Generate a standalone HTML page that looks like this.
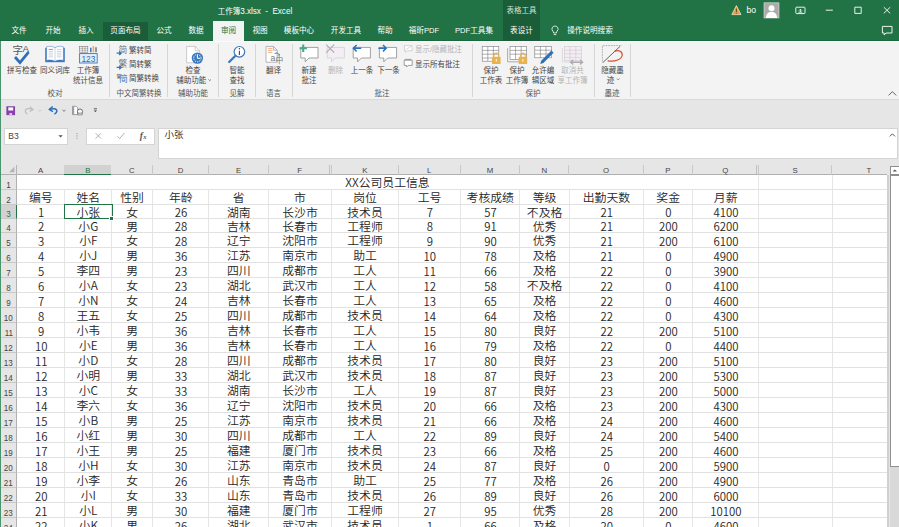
<!DOCTYPE html><html lang="zh-CN"><head><meta charset="utf-8"><title>工作簿3.xlsx - Excel</title>
<style>
*{box-sizing:border-box;margin:0;padding:0}
html,body{width:899px;height:527px;overflow:hidden;background:#e6e6e6}
body{font-family:"Liberation Sans","Noto Sans CJK SC",sans-serif;color:#444}
#app{position:relative;width:899px;height:527px;overflow:hidden;background:#e6e6e6}
.abs{position:absolute}
#titlebar{position:absolute;left:0;top:0;width:899px;height:40.8px;background:#217346;border-bottom:1.1px solid #1c683d}
#ttl{position:absolute;left:155px;width:200px;top:5.8px;text-align:center;color:#fff;font-size:8.200px;line-height:12px;white-space:pre;letter-spacing:-0.05px}
.ctx{position:absolute;left:502.5px;top:0;width:37.8px;height:41px;background:#1b5c39}
.ctxl{position:absolute;left:496.500px;top:5px;width:50px;text-align:center;color:#cfe3d7;font-size:7.5px;line-height:12px}
.tab{position:absolute;top:21px;height:20px;line-height:19px;font-size:7.6px;color:#fff;text-align:center;white-space:nowrap}
.tab.hov{background:#1b5c39}
.tab.act{background:#f3f3f3;color:#217346}
#ribbon{position:absolute;left:1px;top:40.8px;width:898px;height:59.2px;background:#f3f3f3;border-top:1px solid #fbfbfb;border-bottom:1px solid #dadada}
.sep{position:absolute;top:44px;width:1px;height:53px;background:#d6d6d6}
.lb{position:absolute;font-size:7.5px;line-height:9.6px;color:#444;text-align:center;white-space:nowrap}
.lb.dis{color:#b4b4b4}
.gl{position:absolute;top:88.5px;font-size:7.5px;line-height:10px;color:#555;text-align:center;white-space:nowrap}
.sm{position:absolute;font-size:7.5px;line-height:10px;color:#444;white-space:nowrap}
.sm.dis{color:#b4b4b4}
svg{position:absolute;overflow:visible}
#lborder{position:absolute;left:0;top:40.7px;width:1.1px;height:487px;background:#4a946e;z-index:10}
.box{position:absolute;background:#fff;border:0.7px solid #d4d4d4}
/* grid */
#grid{position:absolute;left:0;top:0;width:887.2px;height:527px;overflow:hidden}
#gridbg{position:absolute}
.colhdr{position:absolute;left:0;top:164.6px;width:888.5px;height:10.5px;background:#e6e6e6;border-bottom:1px solid #b0b0b0}
.ch{position:absolute;top:0;height:10.5px;line-height:12.6px;font-size:7.8px;overflow:hidden;color:#444;text-align:center;border-right:1px solid #c8c8c8}
.ch.sel{background:#d2d2d2;color:#217346;border-bottom:1.4px solid #217346}
.rh{position:absolute;left:1.2px;width:15.8px;padding-left:0.2px;background:#e6e6e6;font-size:9.4px;overflow:hidden;color:#444;text-align:center;border-right:1px solid #b0b0b0;border-bottom:1px solid #c8c8c8}
.rh.sel{background:#d2d2d2;color:#217346;border-right:1.4px solid #217346}
.vl{position:absolute;top:175px;width:1px;height:353px;background:#e6e6e6}
.hl{position:absolute;left:16.7px;width:871.3px;height:1px;background:#e1e1e1}
.hid{position:absolute;top:165px;width:0.8px;height:9px;background:#c0c0c0}
.c{position:absolute;font-family:"Noto Sans CJK SC","Liberation Sans",sans-serif;font-size:11.85px;color:#262626;font-weight:350;text-align:center;white-space:nowrap;overflow:hidden;padding-left:0.6px}
.title{position:absolute;font-family:"Noto Sans CJK SC","Liberation Sans",sans-serif;left:17px;width:741px;background:#fff;font-size:11.85px;color:#262626;font-weight:350;text-align:center;white-space:nowrap}
.selbox{position:absolute;border:1.5px solid #217346}
.selh{position:absolute;width:3.2px;height:3.2px;background:#217346;border:0.6px solid #fff;box-sizing:content-box}

.rh span{display:inline-block;transform:scaleX(.86)}
.c.n{font-size:11.4px;padding-left:1.2px}

</style></head><body><div id="app">
<div id="titlebar"></div>
<div class="ctx"></div><div class="ctxl">表格工具</div>
<div id="ttl"><span style="font-size:7.5px">工作簿</span>3.xlsx  -  Excel</div>
<div class="tab" style="left:4px;width:30px">文件</div>
<div class="tab" style="left:38px;width:30px">开始</div>
<div class="tab" style="left:71px;width:30px">插入</div>
<div class="tab hov" style="left:103px;width:45px;top:22px;height:19px;line-height:17px">页面布局</div>
<div class="tab" style="left:149px;width:30px">公式</div>
<div class="tab" style="left:181px;width:30px">数据</div>
<div class="tab act" style="left:213px;width:31px">审阅</div>
<div class="tab" style="left:245px;width:30px">视图</div>
<div class="tab" style="left:279px;width:40px">模板中心</div>
<div class="tab" style="left:326px;width:40px">开发工具</div>
<div class="tab" style="left:370px;width:30px">帮助</div>
<div class="tab" style="left:404px;width:40px">福昕PDF</div>
<div class="tab" style="left:452px;width:44px">PDF工具集</div>
<div class="tab" style="left:496.500px;width:50px">表设计</div>
<div class="tab" style="left:564px;width:52px">操作说明搜索</div>
<div id="ribbon"></div>
<div class="sep" style="left:109.3px"></div>
<div class="sep" style="left:167px"></div>
<div class="sep" style="left:218.4px"></div>
<div class="sep" style="left:254.8px"></div>
<div class="sep" style="left:291.5px"></div>
<div class="sep" style="left:472.4px"></div>
<div class="sep" style="left:593.8px"></div>
<div class="sep" style="left:630px"></div>
<div class="lb" style="left:2px;width:40px;top:66.1px">拼写检查</div>
<div class="lb" style="left:35px;width:40px;top:66.1px">同义词库</div>
<div class="lb" style="left:68px;width:40px;top:66.1px">工作簿<br>统计信息</div>
<div class="gl" style="left:35px;width:40px">校对</div>
<div class="sm" style="left:129px;top:46.2px">繁转简</div>
<div class="sm" style="left:129px;top:60.4px">简转繁</div>
<div class="sm" style="left:129px;top:74.3px">简繁转换</div>
<div class="gl" style="left:113px;width:52px">中文简繁转换</div>
<div class="lb" style="left:168px;width:50px;top:66.1px">检查<br><span style="margin-left:-3.5px">辅助功能</span></div>
<div class="gl" style="left:168px;width:50px">辅助功能</div>
<div class="lb" style="left:219px;width:36px;top:66.1px">智能<br>查找</div>
<div class="gl" style="left:219px;width:36px">见解</div>
<div class="lb" style="left:255px;width:37px;top:66.1px">翻译</div>
<div class="gl" style="left:255px;width:37px">语言</div>
<div class="lb" style="left:294px;width:30px;top:66.1px">新建<br>批注</div>
<div class="lb dis" style="left:320.5px;width:30px;top:66.1px">删除</div>
<div class="lb" style="left:347px;width:30px;top:66.1px">上一条</div>
<div class="lb" style="left:373.5px;width:30px;top:66.1px">下一条</div>
<div class="sm dis" style="left:415px;top:45px">显示/隐藏批注</div>
<div class="sm" style="left:415px;top:59.6px">显示所有批注</div>
<div class="gl" style="left:362px;width:40px">批注</div>
<div class="lb" style="left:471px;width:40px;top:66.1px">保护<br>工作表</div>
<div class="lb" style="left:497px;width:40px;top:66.1px">保护<br>工作簿</div>
<div class="lb" style="left:523px;width:40px;top:66.1px">允许编<br>辑区域</div>
<div class="lb dis" style="left:552.5px;width:40px;top:66.1px">取消共<br>享工作簿</div>
<div class="gl" style="left:513px;width:40px">保护</div>
<div class="lb" style="left:592.5px;width:40px;top:66.1px">隐藏墨<br><span style="margin-left:-4px">迹</span></div>
<div class="gl" style="left:592px;width:40px">墨迹</div>
<!-- formula bar -->
<div class="box" style="left:4.4px;top:127.6px;width:63.4px;height:17px"></div>
<div class="sm" style="left:8.3px;top:131px;font-size:8.5px">B3</div>
<div class="box" style="left:86.3px;top:127.6px;width:68.3px;height:17px"></div>
<div class="box" style="left:157.5px;top:127.6px;width:740.5px;height:31px"></div>
<div class="sm" style="left:164.5px;top:130.3px;font-size:9.5px;color:#333">小张</div>
<div style="position:absolute;left:16.5px;top:174.8px;width:871.5px;height:353px;background:#fff"></div>

<div id="grid">
<div class="colhdr">
<div class="ch" style="left:17.0px;width:48.1px">A</div>
<div class="ch sel" style="left:64.1px;width:47.3px;border-right:0">B</div>
<div class="ch" style="left:112.0px;width:40.6px">C</div>
<div class="ch" style="left:152.6px;width:56.8px">D</div>
<div class="ch" style="left:209.4px;width:59.2px">E</div>
<div class="ch" style="left:268.6px;width:63.3px">F</div>
<div class="ch" style="left:331.9px;width:66.7px">K</div>
<div class="ch" style="left:398.6px;width:62.2px">L</div>
<div class="ch" style="left:460.8px;width:59.3px">M</div>
<div class="ch" style="left:520.1px;width:49.4px">N</div>
<div class="ch" style="left:569.5px;width:74.2px">O</div>
<div class="ch" style="left:643.7px;width:49.4px">P</div>
<div class="ch" style="left:693.1px;width:65.6px">Q</div>
<div class="ch" style="left:758.7px;width:73.8px">S</div>
<div class="ch" style="left:832.5px;width:74.0px">T</div>
</div>
<div style="position:absolute;left:16px;top:165px;width:1px;height:10px;background:#b4b4b4"></div>
<div class="vl" style="left:64.1px"></div>
<div class="vl" style="left:111.0px"></div>
<div class="vl" style="left:151.6px"></div>
<div class="vl" style="left:208.4px"></div>
<div class="vl" style="left:267.6px"></div>
<div class="vl" style="left:330.9px"></div>
<div class="vl" style="left:397.6px"></div>
<div class="vl" style="left:459.8px"></div>
<div class="vl" style="left:519.1px"></div>
<div class="vl" style="left:568.5px"></div>
<div class="vl" style="left:642.7px"></div>
<div class="vl" style="left:692.1px"></div>
<div class="vl" style="left:757.7px"></div>
<div class="vl" style="left:831.5px"></div>
<div class="vl" style="left:905.5px"></div>
<div class="hid" style="left:329.2px"></div>
<div class="hid" style="left:756.0px"></div>
<div class="rh" style="top:175.1px;height:15.0px;line-height:20.0px"><span>1</span></div>
<div class="hl" style="top:189.1px"></div>
<div class="rh" style="top:190.1px;height:15.0px;line-height:20.0px"><span>2</span></div>
<div class="hl" style="top:204.1px"></div>
<div class="rh sel" style="top:205.1px;height:13.9px;line-height:17.8px"><span>3</span></div>
<div class="hl" style="top:218.0px"></div>
<div class="rh" style="top:219.0px;height:14.0px;line-height:18.0px"><span>4</span></div>
<div class="hl" style="top:232.0px"></div>
<div class="rh" style="top:233.0px;height:15.0px;line-height:20.0px"><span>5</span></div>
<div class="hl" style="top:247.0px"></div>
<div class="rh" style="top:248.0px;height:15.0px;line-height:20.0px"><span>6</span></div>
<div class="hl" style="top:262.0px"></div>
<div class="rh" style="top:263.0px;height:15.0px;line-height:20.0px"><span>7</span></div>
<div class="hl" style="top:277.0px"></div>
<div class="rh" style="top:278.0px;height:15.0px;line-height:20.0px"><span>8</span></div>
<div class="hl" style="top:292.0px"></div>
<div class="rh" style="top:293.0px;height:15.0px;line-height:20.0px"><span>9</span></div>
<div class="hl" style="top:307.0px"></div>
<div class="rh" style="top:308.0px;height:15.0px;line-height:20.0px"><span>10</span></div>
<div class="hl" style="top:322.0px"></div>
<div class="rh" style="top:323.0px;height:15.0px;line-height:20.0px"><span>11</span></div>
<div class="hl" style="top:337.0px"></div>
<div class="rh" style="top:338.0px;height:15.0px;line-height:20.0px"><span>12</span></div>
<div class="hl" style="top:352.0px"></div>
<div class="rh" style="top:353.0px;height:15.0px;line-height:20.0px"><span>13</span></div>
<div class="hl" style="top:367.0px"></div>
<div class="rh" style="top:368.0px;height:15.0px;line-height:20.0px"><span>14</span></div>
<div class="hl" style="top:382.0px"></div>
<div class="rh" style="top:383.0px;height:15.0px;line-height:20.0px"><span>15</span></div>
<div class="hl" style="top:397.0px"></div>
<div class="rh" style="top:398.0px;height:15.0px;line-height:20.0px"><span>16</span></div>
<div class="hl" style="top:412.0px"></div>
<div class="rh" style="top:413.0px;height:15.0px;line-height:20.0px"><span>17</span></div>
<div class="hl" style="top:427.0px"></div>
<div class="rh" style="top:428.0px;height:15.0px;line-height:20.0px"><span>18</span></div>
<div class="hl" style="top:442.0px"></div>
<div class="rh" style="top:443.0px;height:15.0px;line-height:20.0px"><span>19</span></div>
<div class="hl" style="top:457.0px"></div>
<div class="rh" style="top:458.0px;height:15.0px;line-height:20.0px"><span>20</span></div>
<div class="hl" style="top:472.0px"></div>
<div class="rh" style="top:473.0px;height:15.0px;line-height:20.0px"><span>21</span></div>
<div class="hl" style="top:487.0px"></div>
<div class="rh" style="top:488.0px;height:15.0px;line-height:20.0px"><span>22</span></div>
<div class="hl" style="top:502.0px"></div>
<div class="rh" style="top:503.0px;height:15.0px;line-height:20.0px"><span>23</span></div>
<div class="hl" style="top:517.0px"></div>
<div class="rh" style="top:518.0px;height:15.0px;line-height:20.0px"><span>24</span></div>
<div class="hl" style="top:532.0px"></div>
<div class="title" style="top:174.6px;height:14.4px;line-height:14.8px">XX公司员工信息</div>
<div class="c" style="left:16.5px;width:48.1px;top:189.6px;height:15.0px;line-height:14.8px">编号</div>
<div class="c" style="left:64.6px;width:46.9px;top:189.6px;height:15.0px;line-height:14.8px">姓名</div>
<div class="c" style="left:111.5px;width:40.6px;top:189.6px;height:15.0px;line-height:14.8px">性别</div>
<div class="c" style="left:152.1px;width:56.8px;top:189.6px;height:15.0px;line-height:14.8px">年龄</div>
<div class="c" style="left:208.9px;width:59.2px;top:189.6px;height:15.0px;line-height:14.8px">省</div>
<div class="c" style="left:268.1px;width:63.3px;top:189.6px;height:15.0px;line-height:14.8px">市</div>
<div class="c" style="left:331.4px;width:66.7px;top:189.6px;height:15.0px;line-height:14.8px">岗位</div>
<div class="c" style="left:398.1px;width:62.2px;top:189.6px;height:15.0px;line-height:14.8px">工号</div>
<div class="c" style="left:460.3px;width:59.3px;top:189.6px;height:15.0px;line-height:14.8px">考核成绩</div>
<div class="c" style="left:519.6px;width:49.4px;top:189.6px;height:15.0px;line-height:14.8px">等级</div>
<div class="c" style="left:569.0px;width:74.2px;top:189.6px;height:15.0px;line-height:14.8px">出勤天数</div>
<div class="c" style="left:643.2px;width:49.4px;top:189.6px;height:15.0px;line-height:14.8px">奖金</div>
<div class="c" style="left:692.6px;width:65.6px;top:189.6px;height:15.0px;line-height:14.8px">月薪</div>
<div class="c n" style="left:16.5px;width:48.1px;top:204.6px;height:13.9px;line-height:15.5px">1</div>
<div class="c" style="left:64.6px;width:46.9px;top:204.6px;height:13.9px;line-height:13.7px">小张</div>
<div class="c" style="left:111.5px;width:40.6px;top:204.6px;height:13.9px;line-height:13.7px">女</div>
<div class="c n" style="left:152.1px;width:56.8px;top:204.6px;height:13.9px;line-height:15.5px">26</div>
<div class="c" style="left:208.9px;width:59.2px;top:204.6px;height:13.9px;line-height:13.7px">湖南</div>
<div class="c" style="left:268.1px;width:63.3px;top:204.6px;height:13.9px;line-height:13.7px">长沙市</div>
<div class="c" style="left:331.4px;width:66.7px;top:204.6px;height:13.9px;line-height:13.7px">技术员</div>
<div class="c n" style="left:398.1px;width:62.2px;top:204.6px;height:13.9px;line-height:15.5px">7</div>
<div class="c n" style="left:460.3px;width:59.3px;top:204.6px;height:13.9px;line-height:15.5px">57</div>
<div class="c" style="left:519.6px;width:49.4px;top:204.6px;height:13.9px;line-height:13.7px">不及格</div>
<div class="c n" style="left:569.0px;width:74.2px;top:204.6px;height:13.9px;line-height:15.5px">21</div>
<div class="c n" style="left:643.2px;width:49.4px;top:204.6px;height:13.9px;line-height:15.5px">0</div>
<div class="c n" style="left:692.6px;width:65.6px;top:204.6px;height:13.9px;line-height:15.5px">4100</div>
<div class="c n" style="left:16.5px;width:48.1px;top:218.5px;height:14.0px;line-height:15.6px">2</div>
<div class="c" style="left:64.6px;width:46.9px;top:218.5px;height:14.0px;line-height:13.8px">小G</div>
<div class="c" style="left:111.5px;width:40.6px;top:218.5px;height:14.0px;line-height:13.8px">男</div>
<div class="c n" style="left:152.1px;width:56.8px;top:218.5px;height:14.0px;line-height:15.6px">28</div>
<div class="c" style="left:208.9px;width:59.2px;top:218.5px;height:14.0px;line-height:13.8px">吉林</div>
<div class="c" style="left:268.1px;width:63.3px;top:218.5px;height:14.0px;line-height:13.8px">长春市</div>
<div class="c" style="left:331.4px;width:66.7px;top:218.5px;height:14.0px;line-height:13.8px">工程师</div>
<div class="c n" style="left:398.1px;width:62.2px;top:218.5px;height:14.0px;line-height:15.6px">8</div>
<div class="c n" style="left:460.3px;width:59.3px;top:218.5px;height:14.0px;line-height:15.6px">91</div>
<div class="c" style="left:519.6px;width:49.4px;top:218.5px;height:14.0px;line-height:13.8px">优秀</div>
<div class="c n" style="left:569.0px;width:74.2px;top:218.5px;height:14.0px;line-height:15.6px">21</div>
<div class="c n" style="left:643.2px;width:49.4px;top:218.5px;height:14.0px;line-height:15.6px">200</div>
<div class="c n" style="left:692.6px;width:65.6px;top:218.5px;height:14.0px;line-height:15.6px">6200</div>
<div class="c n" style="left:16.5px;width:48.1px;top:232.5px;height:15.0px;line-height:16.6px">3</div>
<div class="c" style="left:64.6px;width:46.9px;top:232.5px;height:15.0px;line-height:14.8px">小F</div>
<div class="c" style="left:111.5px;width:40.6px;top:232.5px;height:15.0px;line-height:14.8px">女</div>
<div class="c n" style="left:152.1px;width:56.8px;top:232.5px;height:15.0px;line-height:16.6px">28</div>
<div class="c" style="left:208.9px;width:59.2px;top:232.5px;height:15.0px;line-height:14.8px">辽宁</div>
<div class="c" style="left:268.1px;width:63.3px;top:232.5px;height:15.0px;line-height:14.8px">沈阳市</div>
<div class="c" style="left:331.4px;width:66.7px;top:232.5px;height:15.0px;line-height:14.8px">工程师</div>
<div class="c n" style="left:398.1px;width:62.2px;top:232.5px;height:15.0px;line-height:16.6px">9</div>
<div class="c n" style="left:460.3px;width:59.3px;top:232.5px;height:15.0px;line-height:16.6px">90</div>
<div class="c" style="left:519.6px;width:49.4px;top:232.5px;height:15.0px;line-height:14.8px">优秀</div>
<div class="c n" style="left:569.0px;width:74.2px;top:232.5px;height:15.0px;line-height:16.6px">21</div>
<div class="c n" style="left:643.2px;width:49.4px;top:232.5px;height:15.0px;line-height:16.6px">200</div>
<div class="c n" style="left:692.6px;width:65.6px;top:232.5px;height:15.0px;line-height:16.6px">6100</div>
<div class="c n" style="left:16.5px;width:48.1px;top:247.5px;height:15.0px;line-height:16.6px">4</div>
<div class="c" style="left:64.6px;width:46.9px;top:247.5px;height:15.0px;line-height:14.8px">小J</div>
<div class="c" style="left:111.5px;width:40.6px;top:247.5px;height:15.0px;line-height:14.8px">男</div>
<div class="c n" style="left:152.1px;width:56.8px;top:247.5px;height:15.0px;line-height:16.6px">36</div>
<div class="c" style="left:208.9px;width:59.2px;top:247.5px;height:15.0px;line-height:14.8px">江苏</div>
<div class="c" style="left:268.1px;width:63.3px;top:247.5px;height:15.0px;line-height:14.8px">南京市</div>
<div class="c" style="left:331.4px;width:66.7px;top:247.5px;height:15.0px;line-height:14.8px">助工</div>
<div class="c n" style="left:398.1px;width:62.2px;top:247.5px;height:15.0px;line-height:16.6px">10</div>
<div class="c n" style="left:460.3px;width:59.3px;top:247.5px;height:15.0px;line-height:16.6px">78</div>
<div class="c" style="left:519.6px;width:49.4px;top:247.5px;height:15.0px;line-height:14.8px">及格</div>
<div class="c n" style="left:569.0px;width:74.2px;top:247.5px;height:15.0px;line-height:16.6px">21</div>
<div class="c n" style="left:643.2px;width:49.4px;top:247.5px;height:15.0px;line-height:16.6px">0</div>
<div class="c n" style="left:692.6px;width:65.6px;top:247.5px;height:15.0px;line-height:16.6px">4900</div>
<div class="c n" style="left:16.5px;width:48.1px;top:262.5px;height:15.0px;line-height:16.6px">5</div>
<div class="c" style="left:64.6px;width:46.9px;top:262.5px;height:15.0px;line-height:14.8px">李四</div>
<div class="c" style="left:111.5px;width:40.6px;top:262.5px;height:15.0px;line-height:14.8px">男</div>
<div class="c n" style="left:152.1px;width:56.8px;top:262.5px;height:15.0px;line-height:16.6px">23</div>
<div class="c" style="left:208.9px;width:59.2px;top:262.5px;height:15.0px;line-height:14.8px">四川</div>
<div class="c" style="left:268.1px;width:63.3px;top:262.5px;height:15.0px;line-height:14.8px">成都市</div>
<div class="c" style="left:331.4px;width:66.7px;top:262.5px;height:15.0px;line-height:14.8px">工人</div>
<div class="c n" style="left:398.1px;width:62.2px;top:262.5px;height:15.0px;line-height:16.6px">11</div>
<div class="c n" style="left:460.3px;width:59.3px;top:262.5px;height:15.0px;line-height:16.6px">66</div>
<div class="c" style="left:519.6px;width:49.4px;top:262.5px;height:15.0px;line-height:14.8px">及格</div>
<div class="c n" style="left:569.0px;width:74.2px;top:262.5px;height:15.0px;line-height:16.6px">22</div>
<div class="c n" style="left:643.2px;width:49.4px;top:262.5px;height:15.0px;line-height:16.6px">0</div>
<div class="c n" style="left:692.6px;width:65.6px;top:262.5px;height:15.0px;line-height:16.6px">3900</div>
<div class="c n" style="left:16.5px;width:48.1px;top:277.5px;height:15.0px;line-height:16.6px">6</div>
<div class="c" style="left:64.6px;width:46.9px;top:277.5px;height:15.0px;line-height:14.8px">小A</div>
<div class="c" style="left:111.5px;width:40.6px;top:277.5px;height:15.0px;line-height:14.8px">女</div>
<div class="c n" style="left:152.1px;width:56.8px;top:277.5px;height:15.0px;line-height:16.6px">23</div>
<div class="c" style="left:208.9px;width:59.2px;top:277.5px;height:15.0px;line-height:14.8px">湖北</div>
<div class="c" style="left:268.1px;width:63.3px;top:277.5px;height:15.0px;line-height:14.8px">武汉市</div>
<div class="c" style="left:331.4px;width:66.7px;top:277.5px;height:15.0px;line-height:14.8px">工人</div>
<div class="c n" style="left:398.1px;width:62.2px;top:277.5px;height:15.0px;line-height:16.6px">12</div>
<div class="c n" style="left:460.3px;width:59.3px;top:277.5px;height:15.0px;line-height:16.6px">58</div>
<div class="c" style="left:519.6px;width:49.4px;top:277.5px;height:15.0px;line-height:14.8px">不及格</div>
<div class="c n" style="left:569.0px;width:74.2px;top:277.5px;height:15.0px;line-height:16.6px">22</div>
<div class="c n" style="left:643.2px;width:49.4px;top:277.5px;height:15.0px;line-height:16.6px">0</div>
<div class="c n" style="left:692.6px;width:65.6px;top:277.5px;height:15.0px;line-height:16.6px">4100</div>
<div class="c n" style="left:16.5px;width:48.1px;top:292.5px;height:15.0px;line-height:16.6px">7</div>
<div class="c" style="left:64.6px;width:46.9px;top:292.5px;height:15.0px;line-height:14.8px">小N</div>
<div class="c" style="left:111.5px;width:40.6px;top:292.5px;height:15.0px;line-height:14.8px">女</div>
<div class="c n" style="left:152.1px;width:56.8px;top:292.5px;height:15.0px;line-height:16.6px">24</div>
<div class="c" style="left:208.9px;width:59.2px;top:292.5px;height:15.0px;line-height:14.8px">吉林</div>
<div class="c" style="left:268.1px;width:63.3px;top:292.5px;height:15.0px;line-height:14.8px">长春市</div>
<div class="c" style="left:331.4px;width:66.7px;top:292.5px;height:15.0px;line-height:14.8px">工人</div>
<div class="c n" style="left:398.1px;width:62.2px;top:292.5px;height:15.0px;line-height:16.6px">13</div>
<div class="c n" style="left:460.3px;width:59.3px;top:292.5px;height:15.0px;line-height:16.6px">65</div>
<div class="c" style="left:519.6px;width:49.4px;top:292.5px;height:15.0px;line-height:14.8px">及格</div>
<div class="c n" style="left:569.0px;width:74.2px;top:292.5px;height:15.0px;line-height:16.6px">22</div>
<div class="c n" style="left:643.2px;width:49.4px;top:292.5px;height:15.0px;line-height:16.6px">0</div>
<div class="c n" style="left:692.6px;width:65.6px;top:292.5px;height:15.0px;line-height:16.6px">4600</div>
<div class="c n" style="left:16.5px;width:48.1px;top:307.5px;height:15.0px;line-height:16.6px">8</div>
<div class="c" style="left:64.6px;width:46.9px;top:307.5px;height:15.0px;line-height:14.8px">王五</div>
<div class="c" style="left:111.5px;width:40.6px;top:307.5px;height:15.0px;line-height:14.8px">女</div>
<div class="c n" style="left:152.1px;width:56.8px;top:307.5px;height:15.0px;line-height:16.6px">25</div>
<div class="c" style="left:208.9px;width:59.2px;top:307.5px;height:15.0px;line-height:14.8px">四川</div>
<div class="c" style="left:268.1px;width:63.3px;top:307.5px;height:15.0px;line-height:14.8px">成都市</div>
<div class="c" style="left:331.4px;width:66.7px;top:307.5px;height:15.0px;line-height:14.8px">技术员</div>
<div class="c n" style="left:398.1px;width:62.2px;top:307.5px;height:15.0px;line-height:16.6px">14</div>
<div class="c n" style="left:460.3px;width:59.3px;top:307.5px;height:15.0px;line-height:16.6px">64</div>
<div class="c" style="left:519.6px;width:49.4px;top:307.5px;height:15.0px;line-height:14.8px">及格</div>
<div class="c n" style="left:569.0px;width:74.2px;top:307.5px;height:15.0px;line-height:16.6px">22</div>
<div class="c n" style="left:643.2px;width:49.4px;top:307.5px;height:15.0px;line-height:16.6px">0</div>
<div class="c n" style="left:692.6px;width:65.6px;top:307.5px;height:15.0px;line-height:16.6px">4300</div>
<div class="c n" style="left:16.5px;width:48.1px;top:322.5px;height:15.0px;line-height:16.6px">9</div>
<div class="c" style="left:64.6px;width:46.9px;top:322.5px;height:15.0px;line-height:14.8px">小韦</div>
<div class="c" style="left:111.5px;width:40.6px;top:322.5px;height:15.0px;line-height:14.8px">男</div>
<div class="c n" style="left:152.1px;width:56.8px;top:322.5px;height:15.0px;line-height:16.6px">36</div>
<div class="c" style="left:208.9px;width:59.2px;top:322.5px;height:15.0px;line-height:14.8px">吉林</div>
<div class="c" style="left:268.1px;width:63.3px;top:322.5px;height:15.0px;line-height:14.8px">长春市</div>
<div class="c" style="left:331.4px;width:66.7px;top:322.5px;height:15.0px;line-height:14.8px">工人</div>
<div class="c n" style="left:398.1px;width:62.2px;top:322.5px;height:15.0px;line-height:16.6px">15</div>
<div class="c n" style="left:460.3px;width:59.3px;top:322.5px;height:15.0px;line-height:16.6px">80</div>
<div class="c" style="left:519.6px;width:49.4px;top:322.5px;height:15.0px;line-height:14.8px">良好</div>
<div class="c n" style="left:569.0px;width:74.2px;top:322.5px;height:15.0px;line-height:16.6px">22</div>
<div class="c n" style="left:643.2px;width:49.4px;top:322.5px;height:15.0px;line-height:16.6px">200</div>
<div class="c n" style="left:692.6px;width:65.6px;top:322.5px;height:15.0px;line-height:16.6px">5100</div>
<div class="c n" style="left:16.5px;width:48.1px;top:337.5px;height:15.0px;line-height:16.6px">10</div>
<div class="c" style="left:64.6px;width:46.9px;top:337.5px;height:15.0px;line-height:14.8px">小E</div>
<div class="c" style="left:111.5px;width:40.6px;top:337.5px;height:15.0px;line-height:14.8px">男</div>
<div class="c n" style="left:152.1px;width:56.8px;top:337.5px;height:15.0px;line-height:16.6px">36</div>
<div class="c" style="left:208.9px;width:59.2px;top:337.5px;height:15.0px;line-height:14.8px">吉林</div>
<div class="c" style="left:268.1px;width:63.3px;top:337.5px;height:15.0px;line-height:14.8px">长春市</div>
<div class="c" style="left:331.4px;width:66.7px;top:337.5px;height:15.0px;line-height:14.8px">工人</div>
<div class="c n" style="left:398.1px;width:62.2px;top:337.5px;height:15.0px;line-height:16.6px">16</div>
<div class="c n" style="left:460.3px;width:59.3px;top:337.5px;height:15.0px;line-height:16.6px">79</div>
<div class="c" style="left:519.6px;width:49.4px;top:337.5px;height:15.0px;line-height:14.8px">及格</div>
<div class="c n" style="left:569.0px;width:74.2px;top:337.5px;height:15.0px;line-height:16.6px">22</div>
<div class="c n" style="left:643.2px;width:49.4px;top:337.5px;height:15.0px;line-height:16.6px">0</div>
<div class="c n" style="left:692.6px;width:65.6px;top:337.5px;height:15.0px;line-height:16.6px">4400</div>
<div class="c n" style="left:16.5px;width:48.1px;top:352.5px;height:15.0px;line-height:16.6px">11</div>
<div class="c" style="left:64.6px;width:46.9px;top:352.5px;height:15.0px;line-height:14.8px">小D</div>
<div class="c" style="left:111.5px;width:40.6px;top:352.5px;height:15.0px;line-height:14.8px">女</div>
<div class="c n" style="left:152.1px;width:56.8px;top:352.5px;height:15.0px;line-height:16.6px">28</div>
<div class="c" style="left:208.9px;width:59.2px;top:352.5px;height:15.0px;line-height:14.8px">四川</div>
<div class="c" style="left:268.1px;width:63.3px;top:352.5px;height:15.0px;line-height:14.8px">成都市</div>
<div class="c" style="left:331.4px;width:66.7px;top:352.5px;height:15.0px;line-height:14.8px">技术员</div>
<div class="c n" style="left:398.1px;width:62.2px;top:352.5px;height:15.0px;line-height:16.6px">17</div>
<div class="c n" style="left:460.3px;width:59.3px;top:352.5px;height:15.0px;line-height:16.6px">80</div>
<div class="c" style="left:519.6px;width:49.4px;top:352.5px;height:15.0px;line-height:14.8px">良好</div>
<div class="c n" style="left:569.0px;width:74.2px;top:352.5px;height:15.0px;line-height:16.6px">23</div>
<div class="c n" style="left:643.2px;width:49.4px;top:352.5px;height:15.0px;line-height:16.6px">200</div>
<div class="c n" style="left:692.6px;width:65.6px;top:352.5px;height:15.0px;line-height:16.6px">5100</div>
<div class="c n" style="left:16.5px;width:48.1px;top:367.5px;height:15.0px;line-height:16.6px">12</div>
<div class="c" style="left:64.6px;width:46.9px;top:367.5px;height:15.0px;line-height:14.8px">小明</div>
<div class="c" style="left:111.5px;width:40.6px;top:367.5px;height:15.0px;line-height:14.8px">男</div>
<div class="c n" style="left:152.1px;width:56.8px;top:367.5px;height:15.0px;line-height:16.6px">33</div>
<div class="c" style="left:208.9px;width:59.2px;top:367.5px;height:15.0px;line-height:14.8px">湖北</div>
<div class="c" style="left:268.1px;width:63.3px;top:367.5px;height:15.0px;line-height:14.8px">武汉市</div>
<div class="c" style="left:331.4px;width:66.7px;top:367.5px;height:15.0px;line-height:14.8px">技术员</div>
<div class="c n" style="left:398.1px;width:62.2px;top:367.5px;height:15.0px;line-height:16.6px">18</div>
<div class="c n" style="left:460.3px;width:59.3px;top:367.5px;height:15.0px;line-height:16.6px">87</div>
<div class="c" style="left:519.6px;width:49.4px;top:367.5px;height:15.0px;line-height:14.8px">良好</div>
<div class="c n" style="left:569.0px;width:74.2px;top:367.5px;height:15.0px;line-height:16.6px">23</div>
<div class="c n" style="left:643.2px;width:49.4px;top:367.5px;height:15.0px;line-height:16.6px">200</div>
<div class="c n" style="left:692.6px;width:65.6px;top:367.5px;height:15.0px;line-height:16.6px">5300</div>
<div class="c n" style="left:16.5px;width:48.1px;top:382.5px;height:15.0px;line-height:16.6px">13</div>
<div class="c" style="left:64.6px;width:46.9px;top:382.5px;height:15.0px;line-height:14.8px">小C</div>
<div class="c" style="left:111.5px;width:40.6px;top:382.5px;height:15.0px;line-height:14.8px">女</div>
<div class="c n" style="left:152.1px;width:56.8px;top:382.5px;height:15.0px;line-height:16.6px">33</div>
<div class="c" style="left:208.9px;width:59.2px;top:382.5px;height:15.0px;line-height:14.8px">湖南</div>
<div class="c" style="left:268.1px;width:63.3px;top:382.5px;height:15.0px;line-height:14.8px">长沙市</div>
<div class="c" style="left:331.4px;width:66.7px;top:382.5px;height:15.0px;line-height:14.8px">工人</div>
<div class="c n" style="left:398.1px;width:62.2px;top:382.5px;height:15.0px;line-height:16.6px">19</div>
<div class="c n" style="left:460.3px;width:59.3px;top:382.5px;height:15.0px;line-height:16.6px">87</div>
<div class="c" style="left:519.6px;width:49.4px;top:382.5px;height:15.0px;line-height:14.8px">良好</div>
<div class="c n" style="left:569.0px;width:74.2px;top:382.5px;height:15.0px;line-height:16.6px">23</div>
<div class="c n" style="left:643.2px;width:49.4px;top:382.5px;height:15.0px;line-height:16.6px">200</div>
<div class="c n" style="left:692.6px;width:65.6px;top:382.5px;height:15.0px;line-height:16.6px">5000</div>
<div class="c n" style="left:16.5px;width:48.1px;top:397.5px;height:15.0px;line-height:16.6px">14</div>
<div class="c" style="left:64.6px;width:46.9px;top:397.5px;height:15.0px;line-height:14.8px">李六</div>
<div class="c" style="left:111.5px;width:40.6px;top:397.5px;height:15.0px;line-height:14.8px">女</div>
<div class="c n" style="left:152.1px;width:56.8px;top:397.5px;height:15.0px;line-height:16.6px">36</div>
<div class="c" style="left:208.9px;width:59.2px;top:397.5px;height:15.0px;line-height:14.8px">辽宁</div>
<div class="c" style="left:268.1px;width:63.3px;top:397.5px;height:15.0px;line-height:14.8px">沈阳市</div>
<div class="c" style="left:331.4px;width:66.7px;top:397.5px;height:15.0px;line-height:14.8px">技术员</div>
<div class="c n" style="left:398.1px;width:62.2px;top:397.5px;height:15.0px;line-height:16.6px">20</div>
<div class="c n" style="left:460.3px;width:59.3px;top:397.5px;height:15.0px;line-height:16.6px">66</div>
<div class="c" style="left:519.6px;width:49.4px;top:397.5px;height:15.0px;line-height:14.8px">及格</div>
<div class="c n" style="left:569.0px;width:74.2px;top:397.5px;height:15.0px;line-height:16.6px">23</div>
<div class="c n" style="left:643.2px;width:49.4px;top:397.5px;height:15.0px;line-height:16.6px">200</div>
<div class="c n" style="left:692.6px;width:65.6px;top:397.5px;height:15.0px;line-height:16.6px">4300</div>
<div class="c n" style="left:16.5px;width:48.1px;top:412.5px;height:15.0px;line-height:16.6px">15</div>
<div class="c" style="left:64.6px;width:46.9px;top:412.5px;height:15.0px;line-height:14.8px">小B</div>
<div class="c" style="left:111.5px;width:40.6px;top:412.5px;height:15.0px;line-height:14.8px">男</div>
<div class="c n" style="left:152.1px;width:56.8px;top:412.5px;height:15.0px;line-height:16.6px">25</div>
<div class="c" style="left:208.9px;width:59.2px;top:412.5px;height:15.0px;line-height:14.8px">江苏</div>
<div class="c" style="left:268.1px;width:63.3px;top:412.5px;height:15.0px;line-height:14.8px">南京市</div>
<div class="c" style="left:331.4px;width:66.7px;top:412.5px;height:15.0px;line-height:14.8px">技术员</div>
<div class="c n" style="left:398.1px;width:62.2px;top:412.5px;height:15.0px;line-height:16.6px">21</div>
<div class="c n" style="left:460.3px;width:59.3px;top:412.5px;height:15.0px;line-height:16.6px">66</div>
<div class="c" style="left:519.6px;width:49.4px;top:412.5px;height:15.0px;line-height:14.8px">及格</div>
<div class="c n" style="left:569.0px;width:74.2px;top:412.5px;height:15.0px;line-height:16.6px">24</div>
<div class="c n" style="left:643.2px;width:49.4px;top:412.5px;height:15.0px;line-height:16.6px">200</div>
<div class="c n" style="left:692.6px;width:65.6px;top:412.5px;height:15.0px;line-height:16.6px">4600</div>
<div class="c n" style="left:16.5px;width:48.1px;top:427.5px;height:15.0px;line-height:16.6px">16</div>
<div class="c" style="left:64.6px;width:46.9px;top:427.5px;height:15.0px;line-height:14.8px">小红</div>
<div class="c" style="left:111.5px;width:40.6px;top:427.5px;height:15.0px;line-height:14.8px">男</div>
<div class="c n" style="left:152.1px;width:56.8px;top:427.5px;height:15.0px;line-height:16.6px">30</div>
<div class="c" style="left:208.9px;width:59.2px;top:427.5px;height:15.0px;line-height:14.8px">四川</div>
<div class="c" style="left:268.1px;width:63.3px;top:427.5px;height:15.0px;line-height:14.8px">成都市</div>
<div class="c" style="left:331.4px;width:66.7px;top:427.5px;height:15.0px;line-height:14.8px">工人</div>
<div class="c n" style="left:398.1px;width:62.2px;top:427.5px;height:15.0px;line-height:16.6px">22</div>
<div class="c n" style="left:460.3px;width:59.3px;top:427.5px;height:15.0px;line-height:16.6px">89</div>
<div class="c" style="left:519.6px;width:49.4px;top:427.5px;height:15.0px;line-height:14.8px">良好</div>
<div class="c n" style="left:569.0px;width:74.2px;top:427.5px;height:15.0px;line-height:16.6px">24</div>
<div class="c n" style="left:643.2px;width:49.4px;top:427.5px;height:15.0px;line-height:16.6px">200</div>
<div class="c n" style="left:692.6px;width:65.6px;top:427.5px;height:15.0px;line-height:16.6px">5400</div>
<div class="c n" style="left:16.5px;width:48.1px;top:442.5px;height:15.0px;line-height:16.6px">17</div>
<div class="c" style="left:64.6px;width:46.9px;top:442.5px;height:15.0px;line-height:14.8px">小王</div>
<div class="c" style="left:111.5px;width:40.6px;top:442.5px;height:15.0px;line-height:14.8px">男</div>
<div class="c n" style="left:152.1px;width:56.8px;top:442.5px;height:15.0px;line-height:16.6px">25</div>
<div class="c" style="left:208.9px;width:59.2px;top:442.5px;height:15.0px;line-height:14.8px">福建</div>
<div class="c" style="left:268.1px;width:63.3px;top:442.5px;height:15.0px;line-height:14.8px">厦门市</div>
<div class="c" style="left:331.4px;width:66.7px;top:442.5px;height:15.0px;line-height:14.8px">技术员</div>
<div class="c n" style="left:398.1px;width:62.2px;top:442.5px;height:15.0px;line-height:16.6px">23</div>
<div class="c n" style="left:460.3px;width:59.3px;top:442.5px;height:15.0px;line-height:16.6px">66</div>
<div class="c" style="left:519.6px;width:49.4px;top:442.5px;height:15.0px;line-height:14.8px">及格</div>
<div class="c n" style="left:569.0px;width:74.2px;top:442.5px;height:15.0px;line-height:16.6px">25</div>
<div class="c n" style="left:643.2px;width:49.4px;top:442.5px;height:15.0px;line-height:16.6px">200</div>
<div class="c n" style="left:692.6px;width:65.6px;top:442.5px;height:15.0px;line-height:16.6px">4600</div>
<div class="c n" style="left:16.5px;width:48.1px;top:457.5px;height:15.0px;line-height:16.6px">18</div>
<div class="c" style="left:64.6px;width:46.9px;top:457.5px;height:15.0px;line-height:14.8px">小H</div>
<div class="c" style="left:111.5px;width:40.6px;top:457.5px;height:15.0px;line-height:14.8px">女</div>
<div class="c n" style="left:152.1px;width:56.8px;top:457.5px;height:15.0px;line-height:16.6px">30</div>
<div class="c" style="left:208.9px;width:59.2px;top:457.5px;height:15.0px;line-height:14.8px">江苏</div>
<div class="c" style="left:268.1px;width:63.3px;top:457.5px;height:15.0px;line-height:14.8px">南京市</div>
<div class="c" style="left:331.4px;width:66.7px;top:457.5px;height:15.0px;line-height:14.8px">技术员</div>
<div class="c n" style="left:398.1px;width:62.2px;top:457.5px;height:15.0px;line-height:16.6px">24</div>
<div class="c n" style="left:460.3px;width:59.3px;top:457.5px;height:15.0px;line-height:16.6px">87</div>
<div class="c" style="left:519.6px;width:49.4px;top:457.5px;height:15.0px;line-height:14.8px">良好</div>
<div class="c n" style="left:569.0px;width:74.2px;top:457.5px;height:15.0px;line-height:16.6px">0</div>
<div class="c n" style="left:643.2px;width:49.4px;top:457.5px;height:15.0px;line-height:16.6px">200</div>
<div class="c n" style="left:692.6px;width:65.6px;top:457.5px;height:15.0px;line-height:16.6px">5900</div>
<div class="c n" style="left:16.5px;width:48.1px;top:472.5px;height:15.0px;line-height:16.6px">19</div>
<div class="c" style="left:64.6px;width:46.9px;top:472.5px;height:15.0px;line-height:14.8px">小李</div>
<div class="c" style="left:111.5px;width:40.6px;top:472.5px;height:15.0px;line-height:14.8px">女</div>
<div class="c n" style="left:152.1px;width:56.8px;top:472.5px;height:15.0px;line-height:16.6px">26</div>
<div class="c" style="left:208.9px;width:59.2px;top:472.5px;height:15.0px;line-height:14.8px">山东</div>
<div class="c" style="left:268.1px;width:63.3px;top:472.5px;height:15.0px;line-height:14.8px">青岛市</div>
<div class="c" style="left:331.4px;width:66.7px;top:472.5px;height:15.0px;line-height:14.8px">助工</div>
<div class="c n" style="left:398.1px;width:62.2px;top:472.5px;height:15.0px;line-height:16.6px">25</div>
<div class="c n" style="left:460.3px;width:59.3px;top:472.5px;height:15.0px;line-height:16.6px">77</div>
<div class="c" style="left:519.6px;width:49.4px;top:472.5px;height:15.0px;line-height:14.8px">及格</div>
<div class="c n" style="left:569.0px;width:74.2px;top:472.5px;height:15.0px;line-height:16.6px">26</div>
<div class="c n" style="left:643.2px;width:49.4px;top:472.5px;height:15.0px;line-height:16.6px">200</div>
<div class="c n" style="left:692.6px;width:65.6px;top:472.5px;height:15.0px;line-height:16.6px">4900</div>
<div class="c n" style="left:16.5px;width:48.1px;top:487.5px;height:15.0px;line-height:16.6px">20</div>
<div class="c" style="left:64.6px;width:46.9px;top:487.5px;height:15.0px;line-height:14.8px">小I</div>
<div class="c" style="left:111.5px;width:40.6px;top:487.5px;height:15.0px;line-height:14.8px">女</div>
<div class="c n" style="left:152.1px;width:56.8px;top:487.5px;height:15.0px;line-height:16.6px">33</div>
<div class="c" style="left:208.9px;width:59.2px;top:487.5px;height:15.0px;line-height:14.8px">山东</div>
<div class="c" style="left:268.1px;width:63.3px;top:487.5px;height:15.0px;line-height:14.8px">青岛市</div>
<div class="c" style="left:331.4px;width:66.7px;top:487.5px;height:15.0px;line-height:14.8px">技术员</div>
<div class="c n" style="left:398.1px;width:62.2px;top:487.5px;height:15.0px;line-height:16.6px">26</div>
<div class="c n" style="left:460.3px;width:59.3px;top:487.5px;height:15.0px;line-height:16.6px">89</div>
<div class="c" style="left:519.6px;width:49.4px;top:487.5px;height:15.0px;line-height:14.8px">良好</div>
<div class="c n" style="left:569.0px;width:74.2px;top:487.5px;height:15.0px;line-height:16.6px">26</div>
<div class="c n" style="left:643.2px;width:49.4px;top:487.5px;height:15.0px;line-height:16.6px">200</div>
<div class="c n" style="left:692.6px;width:65.6px;top:487.5px;height:15.0px;line-height:16.6px">6000</div>
<div class="c n" style="left:16.5px;width:48.1px;top:502.5px;height:15.0px;line-height:16.6px">21</div>
<div class="c" style="left:64.6px;width:46.9px;top:502.5px;height:15.0px;line-height:14.8px">小L</div>
<div class="c" style="left:111.5px;width:40.6px;top:502.5px;height:15.0px;line-height:14.8px">男</div>
<div class="c n" style="left:152.1px;width:56.8px;top:502.5px;height:15.0px;line-height:16.6px">30</div>
<div class="c" style="left:208.9px;width:59.2px;top:502.5px;height:15.0px;line-height:14.8px">福建</div>
<div class="c" style="left:268.1px;width:63.3px;top:502.5px;height:15.0px;line-height:14.8px">厦门市</div>
<div class="c" style="left:331.4px;width:66.7px;top:502.5px;height:15.0px;line-height:14.8px">工程师</div>
<div class="c n" style="left:398.1px;width:62.2px;top:502.5px;height:15.0px;line-height:16.6px">27</div>
<div class="c n" style="left:460.3px;width:59.3px;top:502.5px;height:15.0px;line-height:16.6px">95</div>
<div class="c" style="left:519.6px;width:49.4px;top:502.5px;height:15.0px;line-height:14.8px">优秀</div>
<div class="c n" style="left:569.0px;width:74.2px;top:502.5px;height:15.0px;line-height:16.6px">28</div>
<div class="c n" style="left:643.2px;width:49.4px;top:502.5px;height:15.0px;line-height:16.6px">200</div>
<div class="c n" style="left:692.6px;width:65.6px;top:502.5px;height:15.0px;line-height:16.6px">10100</div>
<div class="c n" style="left:16.5px;width:48.1px;top:517.5px;height:15.0px;line-height:16.6px">22</div>
<div class="c" style="left:64.6px;width:46.9px;top:517.5px;height:15.0px;line-height:14.8px">小K</div>
<div class="c" style="left:111.5px;width:40.6px;top:517.5px;height:15.0px;line-height:14.8px">男</div>
<div class="c n" style="left:152.1px;width:56.8px;top:517.5px;height:15.0px;line-height:16.6px">26</div>
<div class="c" style="left:208.9px;width:59.2px;top:517.5px;height:15.0px;line-height:14.8px">湖北</div>
<div class="c" style="left:268.1px;width:63.3px;top:517.5px;height:15.0px;line-height:14.8px">武汉市</div>
<div class="c" style="left:331.4px;width:66.7px;top:517.5px;height:15.0px;line-height:14.8px">技术员</div>
<div class="c n" style="left:398.1px;width:62.2px;top:517.5px;height:15.0px;line-height:16.6px">1</div>
<div class="c n" style="left:460.3px;width:59.3px;top:517.5px;height:15.0px;line-height:16.6px">66</div>
<div class="c" style="left:519.6px;width:49.4px;top:517.5px;height:15.0px;line-height:14.8px">及格</div>
<div class="c n" style="left:569.0px;width:74.2px;top:517.5px;height:15.0px;line-height:16.6px">20</div>
<div class="c n" style="left:643.2px;width:49.4px;top:517.5px;height:15.0px;line-height:16.6px">0</div>
<div class="c n" style="left:692.6px;width:65.6px;top:517.5px;height:15.0px;line-height:16.6px">4600</div>
<div class="selbox" style="left:63.7px;top:203.7px;width:49.3px;height:15.5px"></div>
<div class="selh" style="left:109.3px;top:216.3px"></div>
</div>
<div style="position:absolute;left:887.2px;top:164px;width:12px;height:363px;background:#e6e6e6"></div>
<div style="position:absolute;left:887.2px;top:175px;width:1.5px;height:352px;background:#d0d0d0"></div>
<div style="position:absolute;left:890px;top:175px;width:9px;height:352px;background:#d9d9d9"></div>
<div style="position:absolute;left:890px;top:165.700px;width:12px;height:9.600px;background:#fff;border:0.9px solid #8e8e8e"></div>
<div style="position:absolute;left:890px;top:174.600px;width:12px;height:292.400px;background:#fff;border:0.9px solid #8e8e8e"></div>

<svg style="left:0;top:0" width="899" height="130" viewBox="0 0 899 130" font-family='"Liberation Sans","Noto Sans CJK SC",sans-serif'>
<!-- title bar right icons -->
<g fill="none" stroke="#fff" stroke-width="0.9">
 <path d="M825.800 10.200h7M854.800 7.200h6.400v6.200h-6.400zM883.800 7.200l6.400 6.200M890.200 7.200l-6.400 6.200"/>
 <rect x="795.800" y="7.200" width="9.200" height="6.400" rx="0.800"/>
 <path d="M798.400 12.200h4M800.400 12V9.400M799 10.600l1.400-1.400 1.400 1.400" stroke-width="0.800"/>
 <path d="M882.400 26.400h9.600v6.600h-6l-1.800 2v-2h-1.800z"/>
 <path d="M555 26a3 3 0 0 1 2.100 5.200c-.5.600-.7 1-.7 1.800h-2.800c0-.8-.2-1.200-.7-1.800A3 3 0 0 1 555 26zM553.700 34.600h2.600" stroke-width="0.800"/>
</g>
<path d="M736.400 5.600l4.600 9h-9.200z" fill="#f0a030" stroke="#fff" stroke-width="0.600"/><path d="M736.400 8.600v3.400M736.400 12.800v.8" stroke="#333" stroke-width="0.800"/>
<text x="746.600" y="13" font-size="8.600" fill="#fff">bo</text>
<rect x="764" y="2.800" width="15" height="15.200" fill="#ababab" stroke="#e0e0e0" stroke-width="0.600"/>
<circle cx="771.500" cy="8.200" r="3" fill="#fff"/><path d="M766 18c0-4.200 2-6 5.500-6s5.500 1.800 5.500 6z" fill="#fff"/>
<!-- spell check -->
<text x="12.600" y="53.600" font-size="10.400" fill="#595959">字</text><text x="22.600" y="52" font-size="9.800" fill="#595959">A</text>
<path d="M15 57l5 5.600 8.600-10.400" fill="none" stroke="#2f6fb7" stroke-width="2.800"/>
<!-- thesaurus book -->
<path d="M45.200 47.800h19.600v14.400H45.200z" fill="#3b78bd"/>
<path d="M46.600 46.800c3-.9 6-.7 8.400.9 2.400-1.600 5.400-1.800 8.400-.9v13.600c-3-.6-6-.5-8.400.9-2.400-1.400-5.400-1.500-8.400-.9z" fill="#fff" stroke="#3b78bd" stroke-width="0.500"/>
<path d="M55 47.800v13.400" stroke="#9db9dc" stroke-width="0.600"/>
<path d="M48.600 49.400h4.400" stroke="#e8694a" stroke-width="0.900"/>
<path d="M48.600 51.400h4.400M48.600 53.200h4.400M48.600 55h4.400M48.600 56.800h4.400M57 49.600h4.400M57 51.400h4.400M57 53.200h4.400M57 55h4.400M57 56.800h4.400" stroke="#9aa9bd" stroke-width="0.500"/>
<!-- workbook stats -->
<rect x="79.600" y="46.400" width="8.200" height="5.800" fill="#fff" stroke="#777" stroke-width="0.600"/>
<path d="M79.600 48.300h8.200M79.600 50.200h8.200M82.300 46.400v5.800M85 46.400v5.800" stroke="#777" stroke-width="0.500"/>
<path d="M90.800 52.300v-4.600" stroke="#3b78bd" stroke-width="1.500"/><path d="M93.400 52.300v-6.300" stroke="#e8b04d" stroke-width="1.500"/><path d="M96 52.300v-5" stroke="#777" stroke-width="1.500"/>
<rect x="79.600" y="53.600" width="17.600" height="9.400" fill="#e6eef8" stroke="#3b78bd" stroke-width="0.900"/>
<text x="88.400" y="61.600" font-size="8.800" fill="#2f6fb7" text-anchor="middle" textLength="14" lengthAdjust="spacingAndGlyphs">123</text>
<!-- chinese conv small icons -->
<text x="118.600" y="52.800" font-size="8.800" fill="#777">简</text><path d="M116.600 53.200h4.400M119.200 51.400l2 1.800-2 1.800" fill="none" stroke="#2f6fb7" stroke-width="1.200"/>
<text x="118.600" y="67" font-size="8.800" fill="#777">繁</text><path d="M116.600 67.400h4.400M119.200 65.600l2 1.800-2 1.800" fill="none" stroke="#2f6fb7" stroke-width="1.200"/>
<text x="119" y="82" font-size="8.800" fill="#3b78bd">简</text><text x="116.400" y="77.800" font-size="4.600" fill="#555">繁</text>
<!-- accessibility -->
<path d="M186.600 46.400h8.600l4.400 4.400v12h-13z" fill="#fff" stroke="#b9b9b9" stroke-width="0.700"/><path d="M195.200 46.400v4.400h4.400" fill="none" stroke="#b9b9b9" stroke-width="0.700"/>
<circle cx="197.400" cy="58.100" r="5.700" fill="#3b78bd"/><circle cx="197.400" cy="58.100" r="3.700" fill="none" stroke="#fff" stroke-width="1" stroke-dasharray="1.300 1.050"/>
<path d="M197.400 54.900v3.400h2.600" fill="none" stroke="#fff" stroke-width="1"/>
<!-- smart lookup -->
<circle cx="239.400" cy="51.800" r="5.300" fill="#fff" stroke="#3b78bd" stroke-width="1.200"/>
<path d="M235.200 56l-6 6" stroke="#3b78bd" stroke-width="2.300" stroke-linecap="round"/>
<path d="M239.400 50.800v4.200" stroke="#444" stroke-width="1.100"/><circle cx="239.400" cy="48.800" r="0.750" fill="#444"/>
<!-- translate -->
<path d="M266 46.400h7.400l3.800 3.800v12H266z" fill="#fff" stroke="#9a9a9a" stroke-width="0.700"/><path d="M273.400 46.400v3.800h3.800" fill="none" stroke="#9a9a9a" stroke-width="0.700"/>
<path d="M267.800 48.400h4.600M267.800 50.400h4.600M267.800 52.400h4.600" stroke="#f0a06a" stroke-width="0.800"/>
<text x="270.400" y="60.800" font-size="8.600" fill="#777">a</text><text x="275.200" y="62.800" font-size="8" fill="#777">中</text>
<path d="M274.600 53.600c1.800-1.200 3.600-.6 4.600 1" fill="none" stroke="#3b78bd" stroke-width="1"/><path d="M277.600 55.200l2 .6.300-2.100z" fill="#3b78bd"/>
<!-- comments -->
<g fill="#fff" stroke="#8a8a8a" stroke-width="0.800">
<path d="M300.800 47.400h17.200v10.600h-9l-3.800 3.800v-3.800h-4.400z"/>
<path d="M353.200 47.400h17.200v10.600h-9l-3.800 3.800v-3.800h-4.400z"/>
<path d="M379.400 47.400h17.200v10.600h-9l-3.800 3.800v-3.800h-4.400z"/>
</g>
<path d="M327.200 47.400h17.200v10.600h-9l-3.800 3.800v-3.800h-4.400z" fill="#f4eef4" stroke="#d0d0d0" stroke-width="0.800"/>
<path d="M326.200 44.600l8 8M334.200 44.600l-8 8" stroke="#adadad" stroke-width="1.200"/>
<path d="M303.200 44.600v7.400M299.500 48.300h7.400" stroke="#4ba987" stroke-width="2.100"/>
<path d="M353.400 48.200h7.800M356.600 45l-3.200 3.200 3.200 3.200" fill="none" stroke="#2f6fb7" stroke-width="1.500"/>
<path d="M378.400 48.200h7.800M383 45l3.200 3.200-3.200 3.200" fill="none" stroke="#2f6fb7" stroke-width="1.500"/>
<path d="M404.400 45.600h7.600v5.200h-4.400l-1.600 1.600v-1.600h-1.600z" fill="#fff" stroke="#c4c4c4" stroke-width="0.700"/><path d="M405.400 50l5.800-3.800" stroke="#c4c4c4" stroke-width="0.700"/>
<path d="M405.600 60.200h6.600v5.200h-4l-1.600 1.600v-1.600h-2.400v-5.200zM405.200 60.200v-.8h6" fill="#fff" stroke="#777" stroke-width="0.700"/>
<!-- protect sheet -->
<g fill="#fff" stroke="#7a7a7a" stroke-width="0.600">
<rect x="482.200" y="46.400" width="16.600" height="14.800"/>
<path d="M482.200 50.400h16.600M482.200 54.200h16.600M482.200 58h16.600M487.800 46.400v14.800M493.400 46.400v14.800" fill="none"/>
<rect x="510" y="46.400" width="16.600" height="13"/><path d="M507.600 48.200v13.600h16.400" fill="none"/>
<path d="M510 50.400h16.600M510 54.200h16.600M515.600 46.400v13M521.200 46.400v13" fill="none"/>
<rect x="534.800" y="46.400" width="16.600" height="11.400"/>
<path d="M534.800 50.200h16.600M534.800 54h16.600M540.400 46.400v11.400M546 46.400v11.400" fill="none"/>
</g>
<g><rect x="492" y="56.800" width="8.600" height="7.200" rx="0.600" fill="#e9b251"/><path d="M494 56.800v-1.400a2.300 2.300 0 0 1 4.600 0v1.400" fill="none" stroke="#e9b251" stroke-width="1.100"/><rect x="495.800" y="59" width="1" height="2.600" fill="#fff"/></g>
<g><rect x="518.600" y="56.800" width="8.600" height="7.200" rx="0.600" fill="#e9b251"/><path d="M520.600 56.800v-1.400a2.300 2.300 0 0 1 4.600 0v1.400" fill="none" stroke="#e9b251" stroke-width="1.100"/><rect x="522.400" y="59" width="1" height="2.600" fill="#fff"/></g>
<path d="M551.400 50.600l2.200 2.200-10.200 10.200-3.200 1 1-3.200z" fill="#2f6fb7"/>
<g fill="#f4eef4" stroke="#cfc8cf" stroke-width="0.600"><rect x="564.400" y="46.400" width="17" height="14"/><path d="M562.400 48.200v13.800h16" fill="none"/><path d="M564.400 50.200h17M564.400 53.800h17M564.400 57.400h17M570 46.400v14M575.800 46.400v14" fill="none"/></g>
<path d="M570.600 62.200h12M573.200 59.800l-2.600 2.400 2.600 2.400M580 59.800l2.600 2.400-2.600 2.400" fill="none" stroke="#adadad" stroke-width="1.400"/>
<!-- ink -->
<path d="M602.400 62.600v-17h19" fill="none" stroke="#666" stroke-width="0.700" stroke-dasharray="0.700 0.900"/>
<path d="M603 62.400l17-16" stroke="#555" stroke-width="0.900"/>
<path d="M614.600 51.400c4.400-2 8 .4 7.600 3.800-.5 4-7 7-14.600 5.600" fill="none" stroke="#d4502f" stroke-width="1.200"/>
<path d="M888.600 95.400l3.800-3.800 3.800 3.800" fill="none" stroke="#555" stroke-width="0.900"/>
<path d="M208.400 79.400l1.300 1.300 1.300-1.300M616.900 78.600l1.300 1.300 1.300-1.300" fill="none" stroke="#555" stroke-width="0.700"/>
<!-- QAT -->
<rect x="6.900" y="106.800" width="7.700" height="7.900" fill="#8a3fb0" stroke="#8236a8" stroke-width="0.900"/><rect x="8.300" y="107.400" width="4.900" height="3.100" fill="#fff"/><rect x="9.400" y="113.200" width="2.700" height="1.600" fill="#f1e6f6"/>
<path d="M27.400 114c-3.200-1.800-2.600-5 .4-5.300 1.600-.2 3.400.1 4.800.9" fill="none" stroke="#bdbdbd" stroke-width="1.200"/><path d="M30 106.700l3 2.900-3.300 2" fill="none" stroke="#bdbdbd" stroke-width="1.200"/>
<path d="M38.300 110l1.400 1.300 1.400-1.300" fill="none" stroke="#bdbdbd" stroke-width="0.700"/>
<path d="M54.400 114.200c3.400-1.800 3.200-5-.2-5.400-1.600-.2-3.200 0-4.600.7" fill="none" stroke="#2f6fb7" stroke-width="1.500"/><path d="M52.700 106.500l-3.300 3 3.500 2.200" fill="none" stroke="#2f6fb7" stroke-width="1.500"/>
<path d="M62.600 110l1.400 1.300 1.400-1.300" fill="none" stroke="#555" stroke-width="0.800"/>
<path d="M72.500 106.300h3.600l1.600 1.600v6.700h-5.200z" fill="#fff" stroke="#777" stroke-width="0.700"/><path d="M72.900 106.700h1.300v7.500h-1.300z" fill="#7aa7d8"/>
<circle cx="80" cy="111.600" r="2.600" fill="#f4f4f4" stroke="#555" stroke-width="0.800"/><path d="M77.800 113.200h4.400v1.700h-4.400z" fill="#fff" stroke="#555" stroke-width="0.600"/>
<path d="M93.800 108.800h3.200" stroke="#333" stroke-width="0.800"/><path d="M93.800 110.400l1.600 1.700 1.600-1.700z" fill="#333"/>
<!-- formula bar -->
<path d="M58.400 135.200l2.200 2.200 2.200-2.200z" fill="#555"/>
<circle cx="77" cy="133.600" r="0.550" fill="#8c8c8c"/><circle cx="77" cy="135.900" r="0.550" fill="#8c8c8c"/><circle cx="77" cy="138.200" r="0.550" fill="#8c8c8c"/>
<path d="M95.600 133.200l5.400 5.400M101 133.200l-5.400 5.400" stroke="#a8a8a8" stroke-width="0.900"/>
<path d="M117.400 136.200l2.200 2.400 4.800-5.600" fill="none" stroke="#a8a8a8" stroke-width="0.900"/>
<text x="139.800" y="139" font-size="9.600" font-style="italic" font-weight="bold" font-family='"Liberation Serif",serif' fill="#555">f</text><text x="143.200" y="139.400" font-size="6.400" font-style="italic" font-weight="bold" font-family='"Liberation Serif",serif' fill="#555">x</text>
<path d="M889.800 136.400l2.600-2.600 2.600 2.600" fill="none" stroke="#444" stroke-width="0.900"/>
<!-- select all triangle -->
<path d="M14.400 166.800v5.400H9z" fill="#b4b4b4"/>
<path d="M892.600 171.600l2.200-2.200 2.200 2.200z" fill="#555"/>
</svg>

<div id="lborder"></div>
</div></body></html>
